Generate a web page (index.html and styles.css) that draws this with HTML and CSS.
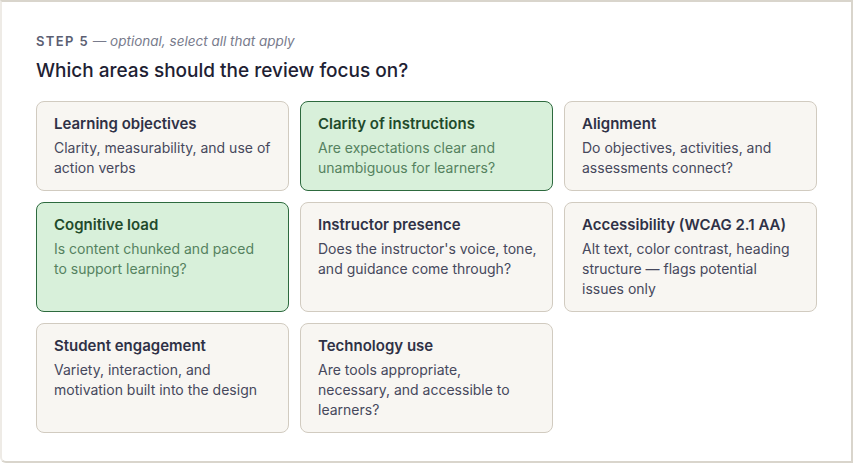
FILE: index.html
```html
<!DOCTYPE html>
<html>
<head>
<meta charset="utf-8">
<title>Review focus</title>
<link rel="stylesheet" href="styles.css">
</head>
<body>
<div class="panel">
  <div class="step"><span class="step-num">STEP 5</span> <span class="step-note">— optional, select all that apply</span></div>
  <h2 class="question">Which areas should the review focus on?</h2>

  <div class="options">
    <div class="option">
      <div class="opt-title">Learning objectives</div>
      <div class="opt-desc">Clarity, measurability, and use of action verbs</div>
    </div>
    <div class="option selected">
      <div class="opt-title">Clarity of instructions</div>
      <div class="opt-desc">Are expectations clear and unambiguous for learners?</div>
    </div>
    <div class="option">
      <div class="opt-title">Alignment</div>
      <div class="opt-desc">Do objectives, activities, and assessments connect?</div>
    </div>
    <div class="option selected">
      <div class="opt-title">Cognitive load</div>
      <div class="opt-desc">Is content chunked and paced<br>to support learning?</div>
    </div>
    <div class="option">
      <div class="opt-title">Instructor presence</div>
      <div class="opt-desc">Does the instructor's voice, tone, and guidance come through?</div>
    </div>
    <div class="option">
      <div class="opt-title">Accessibility (WCAG 2.1 AA)</div>
      <div class="opt-desc">Alt text, color contrast, heading structure — flags potential issues only</div>
    </div>
    <div class="option">
      <div class="opt-title">Student engagement</div>
      <div class="opt-desc">Variety, interaction, and motivation built into the design</div>
    </div>
    <div class="option">
      <div class="opt-title">Technology use</div>
      <div class="opt-desc">Are tools appropriate,<br>necessary, and accessible to learners?</div>
    </div>
  </div>
</div>
</body>
</html>
```

FILE: styles.css
```css
html, body {
  margin: 0;
  padding: 0;
  background: #ffffff;
}

body {
  font-family: Inter, "Noto Sans", sans-serif;
  color: #2e3044;
}

.panel {
  box-sizing: border-box;
  width: 853px;
  height: 463px;
  border: 2px solid #d9d5cc;
  border-left-color: #eeebe6;
  border-radius: 0 0 0 6px;
  padding: 30px 34px 0 34px;
  background: #fff;
}

.step {
  font-size: 13px;
  line-height: 18px;
}

.step-num {
  font-weight: 600;
  letter-spacing: 1.4px;
  color: #5b5e72;
}

.step-note {
  font-size: 13.5px;
  font-style: italic;
  color: #787b8c;
}

.question {
  margin: 9px 0 18px 0;
  font-size: 19px;
  line-height: 24px;
  font-weight: 500;
  color: #1e2133;
}

.options {
  display: grid;
  grid-template-columns: repeat(3, 253px);
  gap: 11px 11px;
}

.option {
  box-sizing: border-box;
  padding: 12px 15px 12px 17px;
  background: #f8f6f2;
  border: 1.5px solid #d1cbc0;
  border-radius: 8px;
}

.opt-title {
  font-size: 15px;
  line-height: 20px;
  font-weight: 600;
  color: #2f3146;
  margin-bottom: 4px;
}

.opt-desc {
  font-size: 14px;
  line-height: 20px;
  color: #46485c;
}

.option.selected {
  background: #d8f0da;
  border-color: #2d6a3e;
}

.option.selected .opt-title {
  color: #1f4a2b;
}

.option.selected .opt-desc {
  color: #55825f;
}
```
